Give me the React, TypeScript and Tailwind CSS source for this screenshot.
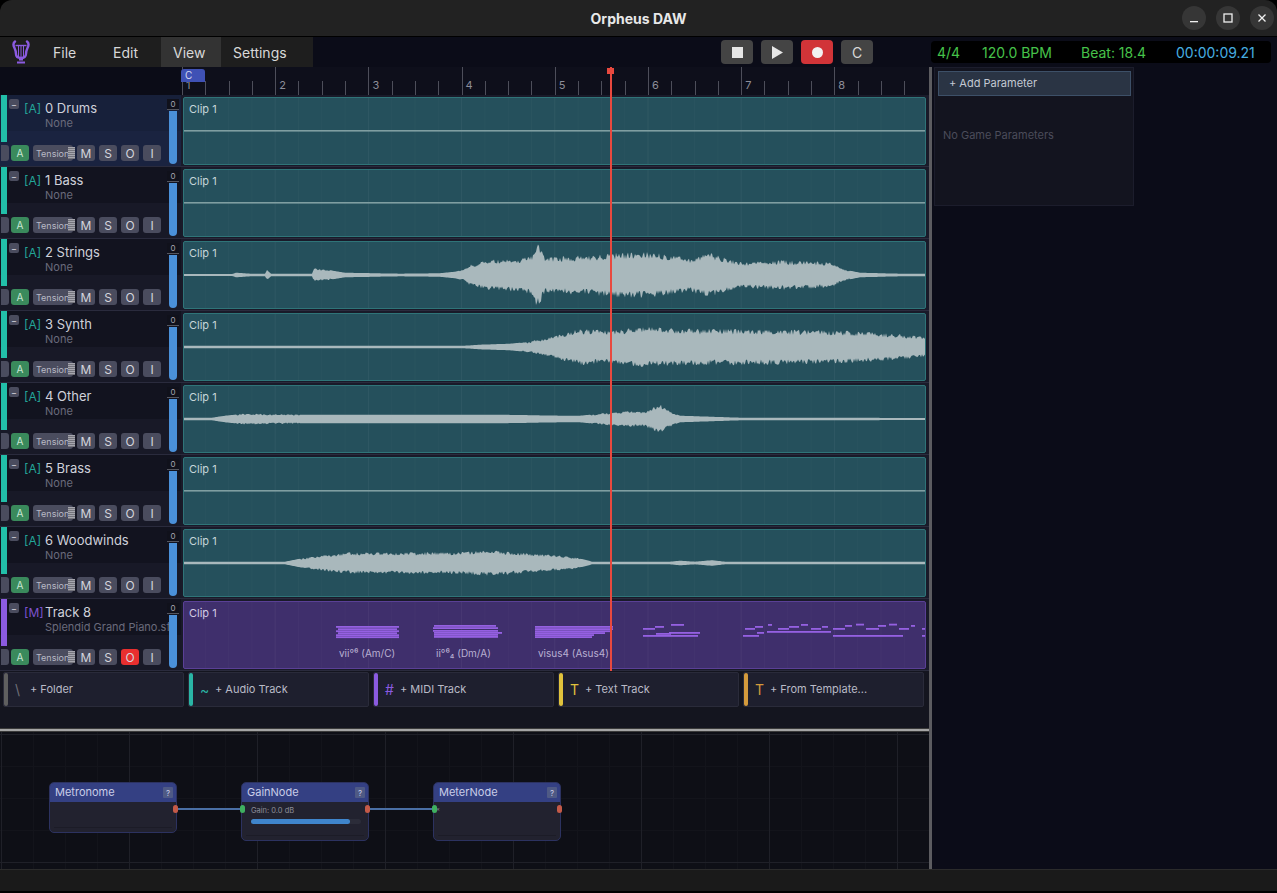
import { useMemo } from "react";

const CLIP_X = 183;
const CLIP_W = 743;
const CLIP_H = 68;
const BEAT = 23.3;

type Env = [number, number][];

const tracks: { name: string; sub: string; kind: string; env?: Env; seed?: number }[] = [
  { name: "0 Drums", sub: "None", kind: "A" },
  { name: "1 Bass", sub: "None", kind: "A" },
  {
    name: "2 Strings",
    sub: "None",
    kind: "A",
    seed: 11,
    env: [
      [183, 0.8], [232, 0.7], [236, 2], [250, 1], [265, 1], [267, 4.5], [271, 1], [312, 1], [314, 6], [330, 4.5],
      [345, 2], [400, 1], [440, 1.5], [455, 3], [464, 5], [470, 10], [490, 14], [520, 16], [533, 19], [536, 29],
      [540, 28], [545, 17], [590, 19], [610, 21], [650, 22], [690, 16], [710, 21], [740, 12], [780, 14], [830, 12],
      [845, 5], [860, 2], [900, 1], [926, 1],
    ],
  },
  {
    name: "3 Synth",
    sub: "None",
    kind: "A",
    seed: 23,
    env: [
      [183, 1], [465, 1], [480, 2], [510, 3], [530, 5], [560, 12], [580, 17], [610, 16], [650, 19], [700, 17],
      [750, 17], [800, 16], [850, 15], [900, 12], [926, 9],
    ],
  },
  {
    name: "4 Other",
    sub: "None",
    kind: "A",
    seed: 37,
    env: [
      [183, 1], [212, 1], [225, 3], [245, 5], [300, 4], [400, 4], [500, 4], [560, 3], [580, 3], [600, 5],
      [625, 7], [645, 7], [660, 14], [668, 8], [680, 3], [710, 2], [740, 1], [926, 0.8],
    ],
  },
  { name: "5 Brass", sub: "None", kind: "A" },
  {
    name: "6 Woodwinds",
    sub: "None",
    kind: "A",
    seed: 51,
    env: [
      [183, 1], [285, 1], [300, 4], [320, 7], [350, 10], [400, 10], [450, 10], [490, 12], [530, 9], [570, 6],
      [585, 3], [592, 1], [670, 1], [680, 2], [695, 1], [712, 2.5], [725, 1], [926, 1],
    ],
  },
  { name: "Track 8", sub: "Splendid Grand Piano.sf2", kind: "M" },
];

// [x1, x2, y] in page coordinates
const notes: [number, number, number][] = [
  [336, 399, 626], [338, 397, 628.3], [336, 399, 630.3], [338, 397, 632.3], [336, 399, 634.3], [336, 399, 636.3],
  [434, 496, 625], [433, 498, 627.2], [433, 498, 630], [434, 502, 632], [434, 498, 634], [434, 498, 636],
  [535, 613, 626], [535, 613, 628.2], [535, 611, 630.3], [535, 605, 632.2], [535, 594, 634.2], [535, 592, 636.2],
  [643, 655, 628], [655, 664, 626], [671, 684, 624], [656, 671, 633], [669, 700, 632], [643, 698, 635],
  [745, 755, 628], [755, 763, 626], [768, 772, 624], [778, 789, 628], [789, 799, 626], [801, 808, 624],
  [811, 821, 628], [822, 828, 626], [833, 845, 628], [845, 852, 625], [856, 864, 623.7], [866, 879, 628],
  [878, 886, 625], [889, 897, 623.7], [899, 909, 628], [911, 915, 625], [922, 926, 628], [922, 926, 635],
  [757, 764, 632], [743, 759, 635], [767, 831, 631], [833, 903, 635],
];

const addButtons = [
  { icon: "\\", label: "+ Folder", bar: "bg-[#5f5f5f]", color: "text-[#6f6f78]" },
  { icon: "~", label: "+ Audio Track", bar: "bg-[#2ab5a5]", color: "text-[#2ab5a5]" },
  { icon: "#", label: "+ MIDI Track", bar: "bg-[#8b5be0]", color: "text-[#8b5be0]" },
  { icon: "T", label: "+ Text Track", bar: "bg-[#e0c23c]", color: "text-[#e0c23c]" },
  { icon: "T", label: "+ From Template...", bar: "bg-[#d49a3c]", color: "text-[#d49a3c]" },
];

function lerpEnv(env: Env, x: number) {
  for (let i = 1; i < env.length; i++) {
    if (x <= env[i][0]) {
      const [x0, y0] = env[i - 1];
      const [x1, y1] = env[i];
      return y0 + ((y1 - y0) * (x - x0)) / (x1 - x0);
    }
  }
  return env[env.length - 1][1];
}

function wavePath(env: Env, seed: number) {
  let s = seed;
  const rnd = () => {
    s = (s * 16807) % 2147483647;
    return (s % 1000) / 1000;
  };
  const mid = CLIP_H / 2;
  const top: string[] = [];
  const bottom: string[] = [];
  for (let i = 0; i <= CLIP_W; i += 1) {
    const e = lerpEnv(env, i + CLIP_X);
    const j = e > 4 ? 0.72 + rnd() * 0.34 : 1;
    const k = e > 4 ? 0.72 + rnd() * 0.34 : 1;
    top.push(`${i} ${(mid - e * j - 0.3).toFixed(1)}`);
    bottom.unshift(`${i} ${(mid + e * k + 0.3).toFixed(1)}`);
  }
  return `M${top.join("L")}L${bottom.join("L")}Z`;
}

function ClipGrid() {
  return (
    <>
      {Array.from({ length: 32 }, (_, i) => (
        <line
          key={i}
          x1={i * BEAT - 1}
          x2={i * BEAT - 1}
          y1={0}
          y2={CLIP_H}
          stroke="#ffffff"
          strokeOpacity={i % 4 === 0 ? 0.05 : 0.022}
        />
      ))}
    </>
  );
}

function Wave({ env, seed }: { env: Env; seed: number }) {
  const d = useMemo(() => wavePath(env, seed), [env, seed]);
  return <path d={d} fill="#a9b8bc" />;
}

function AudioClip({ env, seed }: { env?: Env; seed?: number }) {
  return (
    <div className="relative h-[68px] w-[743px] overflow-hidden rounded-[2px] border border-[#2f7478] bg-[#25505c]">
      <svg width={CLIP_W} height={CLIP_H} className="absolute left-[-1px] top-[-1px]">
        <ClipGrid />
        {env && seed ? <Wave env={env} seed={seed} /> : <rect x={0} y={33} width={CLIP_W} height={1.6} fill="#7f9ea1" />}
      </svg>
      <span className="absolute left-[5px] top-[5px] text-[11px] leading-[13px] text-[#c6d6d9]">Clip 1</span>
    </div>
  );
}

function MidiClip() {
  return (
    <div className="relative h-[68px] w-[743px] overflow-hidden rounded-[2px] border border-[#5a4096] bg-[#3f2f6c]">
      <svg width={CLIP_W} height={CLIP_H} className="absolute left-[-1px] top-[-1px]">
        <ClipGrid />
        {notes.map(([a, b, y], i) => (
          <rect key={i} x={a - CLIP_X} y={y - 601} width={b - a} height={1.8} fill="#9560e2" />
        ))}
      </svg>
      <span className="absolute left-[5px] top-[5px] text-[11px] leading-[13px] text-[#d2cbe4]">Clip 1</span>
      <span className="absolute left-[155px] top-[45px] text-[10px] leading-[13px] text-[#b9b0d2]">
        vii°⁶ (Am/C)
      </span>
      <span className="absolute left-[252px] top-[45px] text-[10px] leading-[13px] text-[#b9b0d2]">
        ii°⁶₄ (Dm/A)
      </span>
      <span className="absolute left-[354px] top-[45px] text-[10px] leading-[13px] text-[#b9b0d2]">
        visus4 (Asus4)
      </span>
    </div>
  );
}

function SmallBtn({ label, red }: { label: string; red?: boolean }) {
  return (
    <div
      className={`flex h-4 w-[18px] items-center justify-center rounded-[3px] pt-[1px] text-[12px] leading-none text-[#d5d5dc] ${
        red ? "bg-[#e82f2f]" : "bg-[#4a4c5e]"
      }`}
    >
      {label}
    </div>
  );
}

function TrackHeader({ track, selected }: { track: (typeof tracks)[number]; selected: boolean }) {
  const isMidi = track.kind === "M";
  return (
    <div
      className={`flex h-[71px] w-[181px] shrink-0 ${
        selected
          ? "bg-[linear-gradient(#17203a_36px,#1a2340_36px)]"
          : "bg-[linear-gradient(#12131f_36px,#181927_36px)]"
      }`}
    >
      <div className="flex w-[165px] flex-col">
        <div className="flex h-[47px]">
          <div className={`ml-[1px] h-[47px] w-[6px] shrink-0 ${isMidi ? "bg-[#8b5be0]" : "bg-[#22bfa9]"}`} />
          <div className="ml-[2px] mt-1 flex h-[10px] w-[10px] shrink-0 items-center justify-center rounded-[2px] bg-[#4a4c5e] text-[9px] leading-none text-[#d5d5dc]">
            −
          </div>
          <span className={`ml-[5px] mt-[6px] w-[21px] shrink-0 text-[12px] leading-[15px] ${isMidi ? "text-[#7d52cf]" : "text-[#23a598]"}`}>
            [{track.kind}]
          </span>
          <div className="mt-[5px] w-[132px] shrink-0 overflow-hidden whitespace-nowrap">
            <div className="text-[13px] leading-4 text-[#cfd1da]">{track.name}</div>
            <div className="mt-[1px] text-[11px] leading-[13px] text-[#6a6b7c]">{track.sub}</div>
          </div>
        </div>
        <div className="relative z-10 mt-[3px] flex gap-1">
          <div className="ml-[1px] mr-[-2px] h-4 w-[8px] rounded-r-[3px] bg-[#4a4c5e]" />
          <div className="flex h-4 w-[18px] items-center justify-center rounded-[3px] bg-[#3a8a5c] text-[10px] leading-none text-[#c9e6d4]">
            A
          </div>
          <div className="relative flex h-4 w-10 items-center rounded-[3px] bg-[#4a4c5e] pl-[3px] text-[9px] leading-none text-[#b9bac6]">
            Tension
            <div className="absolute left-[35px] top-[2px] h-3 w-[7px] bg-[repeating-linear-gradient(#a6a6ae_0_1px,#74747c_1px_2px)]" />
          </div>
          <SmallBtn label="M" />
          <SmallBtn label="S" />
          <SmallBtn label="O" red={isMidi} />
          <SmallBtn label="I" />
        </div>
      </div>
      <div className="z-10 flex w-4 flex-col items-center">
        <div className="mt-[4px] h-[10px] w-3 bg-[#10111b] text-center text-[8px] leading-[10px] text-[#a5a6b0]">0</div>
        <div className="h-[1px] w-3 bg-[#55565f]" />
        <div className="mt-[1px] h-[53px] w-2 rounded-b-[4px] bg-[#4a90d9]" />
      </div>
    </div>
  );
}

function Ruler() {
  return (
    <div className="relative flex h-7 shrink-0 bg-[#0e0f1b]">
      <div className="w-[182px] shrink-0 bg-[#0b0c17]" />
      <div className="flex items-end overflow-hidden">
        {Array.from({ length: 32 }, (_, i) => {
          const bar = i % 4 === 0;
          return (
            <div
              key={i}
              className={`relative w-[23.3px] shrink-0 border-l border-[#4d4e5a] ${bar ? "h-7" : "h-[14px]"}`}
            >
              {bar && (
                <span className="absolute left-[3px] top-[12px] text-[11px] leading-[13px] text-[#8d8e99]">
                  {i / 4 + 1}
                </span>
              )}
            </div>
          );
        })}
      </div>
      <div className="absolute left-[181px] top-[2px] h-[13px] w-6 rounded-t-[3px] bg-[#3f51b5] pl-[4px] text-[10px] leading-[13px] text-[#d5d9f0]">
        C
      </div>
    </div>
  );
}

function GraphNode({ title, left, height, gain, meter }: { title: string; left: string; height: string; gain?: boolean; meter?: boolean }) {
  return (
    <div className={`absolute top-[50px] w-32 rounded-[5px] border border-[#2c3260] bg-[#22222f] ${left} ${height}`}>
      <div className="flex h-[19px] items-center justify-between rounded-t-[4px] bg-[#344083] pl-[5px] pr-[3px] text-[11px] text-[#c9cde8]">
        {title}
        <span className="flex h-[11px] w-[10px] items-center justify-center rounded-[1px] bg-[#4f5a85] text-[8px] leading-none text-[#c9cde8]">
          ?
        </span>
      </div>
      {gain && (
        <div className="px-[9px] pt-[4px]">
          <div className="text-[7.5px] leading-[10px] text-[#8d8e99]">Gain: 0.0 dB</div>
          <div className="mt-[3px] h-[5px] w-[110px] rounded-[3px] bg-[#2b2c39]">
            <div className="h-[5px] w-[99px] rounded-[3px] bg-[#3f85cc]" />
          </div>
        </div>
      )}
      {meter && <div className="ml-[2px] mt-[3px] text-[6px] leading-[8px] text-[#8d8e99]">×</div>}
      <span className="absolute bottom-1 left-1 right-1 h-[1px] bg-[#1c1c27]" />
      {!title.startsWith("Metro") && <span className="absolute left-[-2px] top-[22px] h-2 w-[5px] rounded-[3px] bg-[#3fb060]" />}
      <span className="absolute right-[-2px] top-[22px] h-2 w-[5px] rounded-[3px] bg-[#c45a48]" />
    </div>
  );
}

export default function App() {
  return (
    <div className="flex h-[893px] w-[1277px] flex-col overflow-hidden bg-black [font-family:Inter,sans-serif]">
      {/* title bar */}
      <div className="relative flex h-9 shrink-0 items-center justify-center rounded-t-[12px] bg-[#222222]">
        <span className="text-[14px] font-bold text-[#e8e8e8]">Orpheus DAW</span>
        <div className="absolute right-[2px] top-[6px] flex gap-[10px] pr-[1px]">
          <div className="flex h-6 w-6 items-center justify-center rounded-full bg-[#363636]">
            <svg width="12" height="12" viewBox="0 0 12 12"><rect x="2" y="9" width="8" height="1.3" fill="#f0f0f0" /></svg>
          </div>
          <div className="flex h-6 w-6 items-center justify-center rounded-full bg-[#363636]">
            <svg width="12" height="12" viewBox="0 0 12 12"><rect x="2" y="2" width="8" height="8" fill="none" stroke="#f0f0f0" strokeWidth="1.3" /></svg>
          </div>
          <div className="flex h-6 w-6 items-center justify-center rounded-full bg-[#363636]">
            <svg width="12" height="12" viewBox="0 0 12 12"><path d="M2.5 2.5l7 7M9.5 2.5l-7 7" stroke="#f0f0f0" strokeWidth="1.3" /></svg>
          </div>
        </div>
      </div>

      {/* menu and transport */}
      <div className="mt-[1px] flex h-[30px] shrink-0 bg-[#0b0c18]">
        <div className="flex w-[313px] shrink-0 bg-[#1e1e1e] text-[14px] text-[#d8d8d8]">
          <div className="flex w-[41px] items-center pl-[12px]">
            <svg width="18" height="24" viewBox="0 0 18 24" fill="none" stroke="#8b5be0">
              <path d="M3 1.5C1 3 1.2 5.5 2.5 8c1 2 1.5 4 1.5 6 0 2.5 2 4 5 4s5-1.5 5-4c0-2 .5-4 1.5-6 1.3-2.5 1.5-5-.5-6.5" strokeWidth="2.4" strokeLinecap="round" />
              <path d="M3.5 5.5h11" strokeWidth="1.4" />
              <path d="M6.5 6v11M9 6v12M11.5 6v11" strokeWidth="1" />
              <path d="M7 19.5h4M5 22.5h8" strokeWidth="2.2" />
            </svg>
          </div>
          <div className="flex w-[60px] items-center pl-3">File</div>
          <div className="flex w-[60px] items-center pl-3">Edit</div>
          <div className="flex w-[60px] items-center bg-[#333333] pl-3">View</div>
          <div className="flex items-center pl-3">Settings</div>
        </div>
        <div className="ml-[408px] mt-[3px] flex h-6 gap-2">
          <div className="flex w-8 items-center justify-center rounded-[4px] bg-[#444444]">
            <div className="h-[11px] w-[11px] bg-[#e6e6e6]" />
          </div>
          <div className="flex w-8 items-center justify-center rounded-[4px] bg-[#444444]">
            <svg width="12" height="13" viewBox="0 0 12 13"><path d="M1 0l11 6.5L1 13z" fill="#e6e6e6" /></svg>
          </div>
          <div className="flex w-8 items-center justify-center rounded-[4px] bg-[#d13438]">
            <div className="h-[11px] w-[11px] rounded-full bg-[#f2f2f2]" />
          </div>
          <div className="flex w-8 items-center justify-center rounded-[4px] bg-[#444444] text-[14px] text-[#d8d8d8]">C</div>
        </div>
        <div className="ml-[58px] mt-1 flex h-[22px] w-[340px] items-center rounded-[4px] bg-black pl-[6px] text-[14px]">
          <span className="w-[45px] text-[#46c24a]">4/4</span>
          <span className="w-[99px] text-[#46c24a]">120.0 BPM</span>
          <span className="w-[95px] text-[#46c24a]">Beat: 18.4</span>
          <span className="text-[#46aee0]">00:00:09.21</span>
        </div>
      </div>

      {/* main */}
      <div className="flex min-h-0 flex-1 bg-[#0b0c18]">
        <div className="flex w-[929px] shrink-0 flex-col">
          <Ruler />
          <div className="relative shrink-0 bg-[#191a29]">
            {tracks.map((t, i) => (
              <div key={t.name} className="flex h-[72px] border-b border-[#2a2b3d]">
                <TrackHeader track={t} selected={i === 0} />
                <div className="ml-[2px] mt-[2px]">
                  {t.kind === "M" ? <MidiClip /> : <AudioClip env={t.env} seed={t.seed} />}
                </div>
              </div>
            ))}
            {/* playhead */}
            <div className="absolute bottom-0 left-[610px] top-[-28px] z-20 w-[2px] bg-[#e8493f]" />
            <div className="absolute left-[607px] top-[-27px] z-20 h-[6px] w-[7px] bg-[#e8493f]" />
          </div>

          {/* add track row */}
          <div className="flex h-[57px] shrink-0 gap-1 bg-[#14151f] pl-[3px] pt-[1px]">
            {addButtons.map((b) => (
              <div key={b.label} className="flex h-[35px] w-[181px] items-center rounded-[2px] border border-[#2a2b3a] bg-[#1e1f2e]">
                <div className={`h-[33px] w-[4px] rounded-[2px] ${b.bar}`} />
                <span className={`ml-[7px] w-[15px] text-[14px] ${b.color}`}>{b.icon}</span>
                <span className="text-[11px] text-[#b9bac6]">{b.label}</span>
              </div>
            ))}
          </div>

          <div className="h-1 shrink-0 border-y border-[#3a3a3a] bg-[#a5a5a5]" />

          {/* node graph */}
          <div className="relative min-h-0 flex-1 overflow-hidden bg-[#0e0f16] bg-[linear-gradient(to_right,#1f2028_1px,transparent_1px),linear-gradient(to_bottom,#1f2028_1px,transparent_1px),linear-gradient(to_right,#13141b_1px,transparent_1px),linear-gradient(to_bottom,#13141b_1px,transparent_1px)] bg-[size:128px_128px,128px_128px,32px_32px,32px_32px] bg-[position:1px_2px]">
            <svg width="560" height="137" className="absolute left-0 top-0">
              <path d="M176 77H243M368 77H435" stroke="#4a6fa5" strokeWidth="2" />
            </svg>
            <GraphNode title="Metronome" left="left-[49px]" height="h-[51px]" />
            <GraphNode title="GainNode" left="left-[241px]" height="h-[59px]" gain />
            <GraphNode title="MeterNode" left="left-[433px]" height="h-[59px]" meter />
          </div>
        </div>

        <div className="h-full w-[3px] shrink-0 bg-[#5c5c60]" />

        <div className="ml-[2px] h-[139px] w-[200px] border border-[#1c1d2c] bg-[#13141f] pl-[3px] pt-[3px]">
          <div className="flex h-[25px] w-[193px] items-center border border-[#3d5068] bg-[#2a3444] pl-[10px] text-[11px] text-[#c3c9d3]">
            + Add Parameter
          </div>
          <div className="ml-[5px] mt-[31px] text-[11px] text-[#4b4c5a]">No Game Parameters</div>
        </div>
      </div>

      {/* status bar */}
      <div className="mb-[2px] h-[22px] shrink-0 border-t border-[#2b2b2b] bg-[#1a1a1a]" />
    </div>
  );
}
